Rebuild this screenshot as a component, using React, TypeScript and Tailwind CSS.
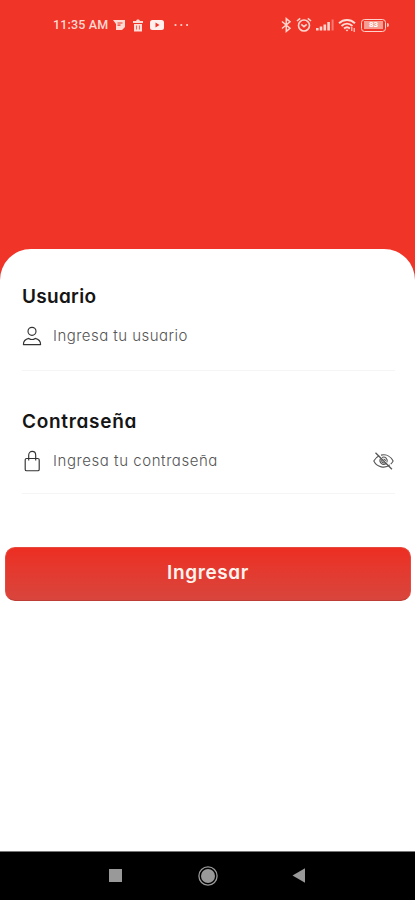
import React from "react";

const TEXT = "font-['Inter','Liberation_Sans',sans-serif] [font-feature-settings:'cv11'] whitespace-nowrap";

function StatusBar() {
  return (
    <div className="flex h-[50px] items-center justify-between pl-[53px] pr-[26px] text-[#ffd9d2]">
      <div className="flex items-center">
        <span className="w-[56px] whitespace-nowrap font-['Roboto',sans-serif] text-[12.5px] font-medium leading-none tracking-[0.15px]">
          11:35 AM
        </span>
        <svg className="ml-1 h-[12px] w-[12px]" viewBox="0 0 12 12">
          <path d="M0 1h12v7l-3 3H3V5L0 1z" fill="#ffdcd5" />
          <path d="M4.5 4h5M4.5 6.2h3" stroke="#f03428" strokeWidth="1.2" />
        </svg>
        <svg className="ml-[7px] h-[13px] w-[12px]" viewBox="0 0 12 13">
          <path d="M1 2h3l1-1.5h2L8 2h3v2H1zM2 5h8v7.5H2z" fill="#ffdcd5" />
          <path d="M4.5 6.5v4M7.5 6.5v4" stroke="#f03428" strokeWidth=".7" />
        </svg>
        <svg className="ml-[6px] h-[12px] w-[14px]" viewBox="0 0 14 12">
          <rect y="1" width="14" height="10" rx="2.5" fill="#fff0ed" />
          <path d="M5.5 3.5v5l4-2.5z" fill="#f03428" />
        </svg>
        <svg className="ml-[10px] h-[4px] w-[15px]" viewBox="0 0 15 4" fill="#ffd2cb">
          <circle cx="1.5" cy="2" r="1.1" />
          <circle cx="7.3" cy="2" r="1.1" />
          <circle cx="13.1" cy="2" r="1.1" />
        </svg>
      </div>
      <div className="flex items-center">
        <svg className="h-[16px] w-[11px]" viewBox="0 0 11 16" fill="none" stroke="#ffd6cf" strokeWidth="1.5">
          <path d="M1 4.5l8 6.7-3.7 3.1V1.7L9 4.8l-8 6.7" />
        </svg>
        <svg className="ml-[4px] h-[16px] w-[16px]" viewBox="0 0 16 16" fill="none" stroke="#ffd6cf" strokeWidth="1.6">
          <circle cx="8" cy="8.5" r="5.5" />
          <path d="M1 4l3.2-2.6M15 4l-3.2-2.6M5.3 7.4L8 9.7l2.7-2.3" />
        </svg>
        <svg className="ml-[4px] h-[14px] w-[18px]" viewBox="0 0 18 14" fill="#ffd2cb">
          <rect x="0" y="10" width="2.6" height="2.5" />
          <rect x="3.7" y="8.5" width="2.6" height="4" />
          <rect x="7.5" y="6.5" width="2.6" height="6" />
          <rect x="11.3" y="4" width="2.6" height="8.5" />
          <rect x="15.6" y="1.5" width="2" height="11" opacity=".45" />
        </svg>
        <svg className="ml-[4px] h-[15px] w-[18px]" viewBox="0 0 18 15" fill="none" stroke="#ffdcd5" strokeWidth="1.9">
          <path d="M1 5.2c4.7-4.3 11.3-4.3 16 0M3.5 8c3.3-3 7.7-3 11 0M6 10.5c2-1.7 4-1.7 6 0" />
          <path d="M7.5 11.7h3L9 13.5z" fill="#ffdcd5" stroke="none" />
          <path d="M13.8 9v4M16.2 10v4" strokeWidth="1.1" />
        </svg>
        <div className="ml-[5px] flex h-[13px] w-[25px] items-center justify-center rounded-[3.5px] border-[1.5px] border-[#ffd2cb]">
          <span className="flex h-[8px] w-[19px] items-center justify-center bg-[#f79c91] font-['Roboto',sans-serif] text-[8px] font-bold leading-none text-white">
            83
          </span>
        </div>
        <div className="ml-px h-1 w-[2px] rounded-r bg-[#ffc5bd]" />
      </div>
    </div>
  );
}

function UserIcon() {
  return (
    <svg className="h-[20px] w-[20px]" viewBox="0 0 20 20" fill="none" stroke="#333" strokeWidth="1.15" strokeLinejoin="round">
      <circle cx="10" cy="5.3" r="4" />
      <path d="M1.4 18.6h17.2c0-3.3-2.2-5.5-5.4-6.2-1.8 1.2-4.6 1.2-6.4 0-3.2.7-5.4 2.9-5.4 6.2z" />
    </svg>
  );
}

function BagIcon() {
  return (
    <svg className="h-[22px] w-[20px]" viewBox="0 0 20 22" fill="none" stroke="#333" strokeWidth="1.15" strokeLinejoin="round">
      <path d="M4.6 8.5h11.2c.8 0 1.4.5 1.4 1.3v9.6c0 .8-.6 1.3-1.4 1.3H4.6c-.8 0-1.4-.5-1.4-1.3V9.8c0-.8.6-1.3 1.4-1.3z" />
      <path d="M6.7 10.5V5.3c0-5.2 7-5.2 7 0v5.2" />
    </svg>
  );
}

function HiddenEyeIcon() {
  return (
    <svg className="h-[18px] w-[21px]" viewBox="0 0 21 18" fill="none" stroke="#555" strokeWidth="1.1">
      <path d="M6.2 3.7C3.8 4.7 2 6.6.8 9c3.2 6.5 11.4 7.8 16 3.9M8 3.1c5.2-1.2 9.8 1.5 12.1 5.9-.6 1.2-1.4 2.3-2.4 3.2" />
      <path d="M7.5 6.5c-2 3.8 2 7.5 5.7 5M9 5.4c3.2-1.3 6.2 1.7 4.9 5M9 7.5c-1 2 .6 3.7 2.6 3.2M10.5 7c1.2.1 1.9.9 2 2" />
      <path d="M2.5.8l16.4 16.4" strokeWidth="1.3" />
    </svg>
  );
}

export default function App() {
  return (
    <main className="flex h-[900px] w-full flex-col overflow-hidden bg-[#f03428]">
      <header className="h-[249px] shrink-0">
        <StatusBar />
      </header>
      <section className="flex min-h-0 flex-1 flex-col rounded-t-[31px] bg-white">
        <div className="ml-[22px] mr-[20px] mt-[36px] h-[86px] border-b border-[#f5f5f5]">
          <h2 className={`${TEXT} text-[19px] font-semibold leading-6 tracking-[0.3px] text-[#151515]`}>Usuario</h2>
          <div className="mt-[15px] flex h-[24px] items-center">
            <UserIcon />
            <span className={`${TEXT} ml-[11px] text-[15px] font-light tracking-[0.46px] text-[#555]`}>Ingresa tu usuario</span>
          </div>
        </div>
        <div className="ml-[22px] mr-[20px] mt-[39px] h-[84px] border-b border-[#f5f5f5]">
          <h2 className={`${TEXT} text-[19px] font-semibold leading-6 tracking-[0.7px] text-[#151515]`}>Contraseña</h2>
          <div className="mt-[15px] flex h-[24px] items-center">
            <BagIcon />
            <span className={`${TEXT} ml-[11px] text-[15px] font-light tracking-[0.56px] text-[#555]`}>Ingresa tu contraseña</span>
            <span className="ml-auto mr-px"><HiddenEyeIcon /></span>
          </div>
        </div>
        <button className={`${TEXT} ml-[5px] mr-[4px] mt-[53px] h-[54px] rounded-[10px] border border-[#e6493d] border-b-[#bd3c33] bg-linear-to-b from-[#ed2d22] to-[#d8453c] pb-[2px] text-[19px] font-semibold tracking-[0.6px] text-[#fff3ee]`}>
          Ingresar
        </button>
      </section>
      <nav className="flex h-[49px] shrink-0 items-center border-t border-[#777] bg-black pb-px pl-[109px]">
        <span className="h-[13px] w-[13px] bg-[#999]" />
        <svg className="ml-[76px] h-5 w-5" viewBox="0 0 20 20">
          <circle cx="10" cy="10" r="9.1" fill="none" stroke="#999" strokeWidth="1.3" />
          <circle cx="10" cy="10" r="7" fill="#999" />
        </svg>
        <svg className="ml-[74px] h-[15px] w-[13px]" viewBox="0 0 13 15">
          <path d="M13 .3v14.4L.5 7.5z" fill="#999" />
        </svg>
      </nav>
    </main>
  );
}
